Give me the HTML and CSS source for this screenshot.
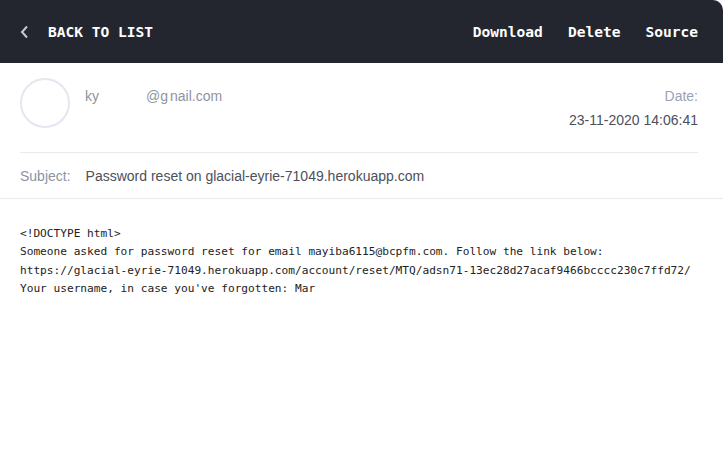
FILE: index.html
```html
<!DOCTYPE html>
<html>
<head>
<meta charset="utf-8">
<link rel="stylesheet" href="styles.css">
</head>
<body>
<header class="topbar">
  <a class="back">
    <svg class="chev" width="9" height="14" viewBox="0 0 9 14"><path d="M7 1.5 L2 7 L7 12.5" fill="none" stroke="#c9cacd" stroke-width="2"/></svg>
    <span>BACK TO LIST</span>
  </a>
  <nav class="actions">
    <a>Download</a>
    <a>Delete</a>
    <a>Source</a>
  </nav>
</header>
<section class="meta">
  <div class="avatar"></div>
  <div class="from"><span>ky</span><span class="gap1"></span><span>@g</span><span class="gap2"></span><span>nail.com</span></div>
  <div class="date">
    <div class="date-label">Date:</div>
    <div class="date-value">23-11-2020 14:06:41</div>
  </div>
</section>
<section class="subject">
  <span class="subject-label">Subject:</span>
  <span class="subject-value">Password reset on glacial-eyrie-71049.herokuapp.com</span>
</section>
<pre class="content">&lt;!DOCTYPE html&gt;
Someone asked for password reset for email mayiba6115@bcpfm.com. Follow the link below:
https://glacial-eyrie-71049.herokuapp.com/account/reset/MTQ/adsn71-13ec28d27acaf9466bcccc230c7ffd72/
Your username, in case you've forgotten: Mar</pre>
</body>
</html>
```
FILE: styles.css
```css
html, body {
  margin: 0;
  padding: 0;
  background: #ffffff;
}
body {
  font-family: "Liberation Sans", Arial, sans-serif;
}
.topbar {
  height: 63px;
  background: #23262e;
  border-top-right-radius: 10px;
  display: flex;
  align-items: center;
  justify-content: space-between;
  padding: 0 25px 0 20px;
  font-family: "DejaVu Sans Mono", monospace;
  font-weight: bold;
  font-size: 14.55px;
  color: #ffffff;
}
.back {
  display: flex;
  align-items: center;
  gap: 19px;
}
.chev {
  display: block;
}
.actions {
  display: flex;
  gap: 25px;
}
.meta {
  margin: 0 25px 0 20px;
  padding: 15px 0 24px;
  border-bottom: 1px solid #e9e9ee;
  display: flex;
  align-items: flex-start;
}
.avatar {
  width: 46px;
  height: 46px;
  border: 2px solid #e6e5f0;
  border-radius: 50%;
  flex: none;
}
.from {
  margin-left: 15px;
  margin-top: 10px;
  font-size: 14px;
  color: #8f94a0;
  flex: 1;
  white-space: nowrap;
}
.gap1 {
  display: inline-block;
  width: 47px;
}
.gap2 {
  display: inline-block;
  width: 2px;
}
.date {
  text-align: right;
  font-size: 14px;
  margin-top: 10px;
}
.date-label {
  color: #9aa2b4;
}
.date-value {
  color: #4b4f59;
  margin-top: 8px;
}
.subject {
  padding: 15px 20px 13px;
  border-bottom: 1px solid #e9e9ee;
  font-size: 14px;
  line-height: 17px;
  display: flex;
  gap: 15px;
}
.subject-label {
  color: #8c93a2;
}
.subject-value {
  color: #4c505c;
}
.content {
  margin: 0;
  padding: 26px 20px;
  font-family: "DejaVu Sans Mono", monospace;
  font-size: 11.15px;
  line-height: 18.3px;
  color: #222222;
}
```
